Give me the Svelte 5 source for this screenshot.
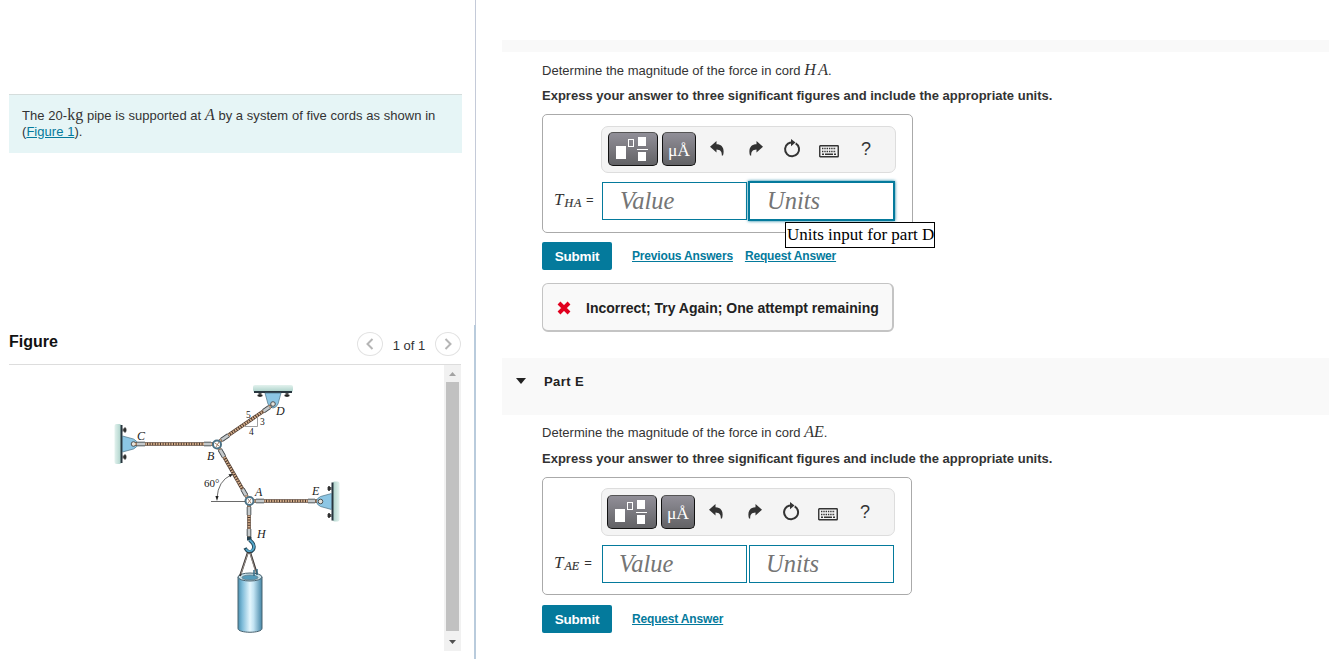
<script lang="ts">
  /**
   * Homework item view: problem statement and figure on the left,
   * answer parts on the right.
   */
  interface Part {
    id: string;
    cord: string;
    links: string[];
    focused: boolean;
    feedback?: string;
  }

  const parts: Part[] = [
    {
      id: 'D',
      cord: 'HA',
      links: ['Previous Answers', 'Request Answer'],
      focused: true,
      feedback: 'Incorrect; Try Again; One attempt remaining'
    },
    { id: 'E', cord: 'AE', links: ['Request Answer'], focused: false }
  ];

  // Cord segments: rope with a metal sleeve at both ends
  const cords = [
    { x1: 135, y1: 444, x2: 213, y2: 444 },
    { x1: 220, y1: 441, x2: 271, y2: 406 },
    { x1: 219, y1: 448, x2: 247, y2: 497 },
    { x1: 254, y1: 501, x2: 317, y2: 501 },
    { x1: 249, y1: 505, x2: 249, y2: 538 }
  ];

  function sleeve(c: (typeof cords)[number], atEnd: boolean) {
    const len = Math.hypot(c.x2 - c.x1, c.y2 - c.y1);
    const a = atEnd ? (len - 9) / len : 2 / len;
    const b = atEnd ? (len - 2) / len : 10 / len;
    const dx = c.x2 - c.x1;
    const dy = c.y2 - c.y1;
    return `M${c.x1 + dx * a} ${c.y1 + dy * a}L${c.x1 + dx * b} ${c.y1 + dy * b}`;
  }
</script>

{#snippet support()}
  <rect x="-7" y="-20" width="7" height="40" rx="2" fill="url(#wall)" />
  <path d="M1-14h4M1 13h4" stroke="#555" stroke-width="3" />
  <path d="M3.500-16.500v5M3.500 10.500v5" stroke="#222" stroke-width="1.500" />
  <path d="M0-19V19" stroke="#28363f" stroke-width="2" />
  <path d="M1-8L12-5Q16-3 16 0T12 5L1 8Z" fill="#8cc6e4" stroke="#4a7184" stroke-width=".7" />
  <circle cx="12" cy="0" r="2.300" fill="#e6e4dc" stroke="#444" stroke-width=".9" />
{/snippet}

{#snippet toolbar()}
  <div class="toolbar">
    <button class="tool templates" aria-label="Templates">
      <svg width="48" height="32" viewBox="0 0 48 32">
        <path d="M7 13h10v13H7zM29 4h8v9h-8zM29 19h8v9h-8zM28 16h11v1H28z" fill="#fff" />
        <rect x="19.5" y="6.5" width="5" height="7" fill="none" stroke="#fff" />
      </svg>
    </button>
    <button class="tool symbols" aria-label="Symbols">μÅ</button>
    <svg class="icon undo" width="14" height="15" viewBox="0 0 14 15">
      <path d="M6.500 0v3.300C12 3.300 15 7.500 13 14.500h-1.200C12 10.500 10.500 8.600 6.500 8.400V11.500L0 5.700Z" fill="#333" />
    </svg>
    <svg class="icon redo" width="14" height="15" viewBox="0 0 14 15">
      <path d="M7.500 0v3.300C2 3.300-1 7.500 1 14.500h1.200C2 10.500 3.500 8.600 7.500 8.400V11.500L14 5.700Z" fill="#333" />
    </svg>
    <svg class="icon reset" width="18" height="19" viewBox="0 0 18 19">
      <path d="M12.700 4.300A7 7 0 1 1 5 4.600Q6.800 3.500 9 3.500" fill="none" stroke="#333" stroke-width="2" />
      <path d="M8 0L12.500 3.500 8 7.200Z" fill="#333" />
    </svg>
    <svg class="icon keyboard" width="20" height="13" viewBox="0 0 20 13">
      <rect x=".75" y=".75" width="18.500" height="11" rx=".5" fill="none" stroke="#333" stroke-width="1.400" />
      <path d="M3 3.500h14M3 6.500h14" stroke="#333" stroke-width="1.600" stroke-dasharray="1.400 .9" />
      <path d="M3 9.300h2M6 9.300h8M15 9.300h2" stroke="#333" stroke-width="1.400" />
    </svg>
    <span class="help">?</span>
  </div>
{/snippet}

<div class="page">
  <aside class="left">
    <section class="problem">
      The 20-<span class="math kg">kg</span> pipe is supported at <i class="math">A</i> by a system of five cords as shown in<br />
      (<a href="#figure">Figure 1</a>).
    </section>

    <section class="figure" id="figure">
      <header class="figure-head">
        <h2>Figure</h2>
        <nav class="pager">
          <button aria-label="Previous">
            <svg width="8" height="12" viewBox="0 0 8 12"><path d="M6.500 1L1.500 6l5 5" /></svg>
          </button>
          <span>1 of 1</span>
          <button aria-label="Next">
            <svg width="8" height="12" viewBox="0 0 8 12"><path d="M1.500 1l5 5-5 5" /></svg>
          </button>
        </nav>
      </header>

      <div class="viewer">
        <svg class="diagram" width="435" height="286" viewBox="9 365 435 286">
          <defs>
            <linearGradient id="wall">
              <stop offset="0" stop-color="#e3f2ee" />
              <stop offset="1" stop-color="#a9d0c8" />
            </linearGradient>
            <linearGradient id="pipe">
              <stop offset="0" stop-color="#4a90b0" />
              <stop offset=".18" stop-color="#7fbcd9" />
              <stop offset=".5" stop-color="#e4f6fd" />
              <stop offset=".65" stop-color="#c2e3f2" />
              <stop offset="1" stop-color="#4587a8" />
            </linearGradient>
          </defs>

          <g transform="translate(121.500 444)">{@render support()}</g>
          <g transform="translate(273 392) rotate(90)">{@render support()}</g>
          <g transform="translate(332.500 501.500) rotate(180)">{@render support()}</g>

          {#each cords as c}
            <line x1={c.x1} y1={c.y1} x2={c.x2} y2={c.y2} stroke="#4a372c" stroke-width="3.600" />
            <line x1={c.x1} y1={c.y1} x2={c.x2} y2={c.y2} stroke="#d3ad8a" stroke-width="2.600" stroke-dasharray="1.600 1" />
            <path d={sleeve(c, false)} stroke="#454c50" stroke-width="4.600" />
            <path d={sleeve(c, false)} stroke="#c5c9cb" stroke-width="2.800" />
            <path d={sleeve(c, true)} stroke="#454c50" stroke-width="4.600" />
            <path d={sleeve(c, true)} stroke="#c5c9cb" stroke-width="2.800" />
          {/each}

          <g fill="#fff" stroke="#4b7286" stroke-width="2">
            <circle cx="217" cy="444.500" r="4" />
            <circle cx="249.500" cy="501" r="4" />
          </g>
          <path d="M215 443l4 3M219 442l-3 5M248 499l3 4M251 499l-3 4" stroke="#a58165" />

          <!-- angle and slope marks -->
          <g fill="none" stroke="#444" stroke-width=".8">
            <path d="M211 501.500h34M217 498Q218 481 231 475" />
            <path d="M245 426.500h12.500V417" stroke="#888" />
          </g>
          <path d="M217 501l-1.600-5h3.200zM233 474l-4.500.3 1.700 3z" fill="#222" />

          <!-- hook, sling and pipe -->
          <path d="M247 536.500h4.500v4H247z" fill="#26404e" />
          <path d="M249.500 540Q256 545 253 550Q249 555 245 548" fill="none" stroke="#234658" stroke-width="3.500" />
          <path d="M249.500 540Q256 545 253 549.500Q249 553.500 246 549" fill="none" stroke="#53a6ca" stroke-width="1.800" />
          <path d="M238 577v51.500c0 5 24 5 24 0V577z" fill="url(#pipe)" stroke="#48626f" />
          <ellipse cx="250" cy="577" rx="12" ry="4" fill="#c9e3ec" stroke="#48626f" />
          <ellipse cx="250" cy="577.500" rx="8" ry="2.500" fill="#559bba" stroke="#5b7480" stroke-width=".7" />
          <path d="M248 552L240 576M250 552L257 574" fill="none" stroke="#3e3836" stroke-width="2" />
          <path d="M248 553L241 574M250 553L256 573" fill="none" stroke="#b7b0aa" stroke-width=".7" />
          <path d="M254 570v6M257 569v6" stroke="#366e88" stroke-width="1.500" />

          <g class="labels">
            <text x="137" y="440">C</text>
            <text x="207" y="460">B</text>
            <text x="276" y="415">D</text>
            <text x="255" y="496">A</text>
            <text x="312" y="495">E</text>
            <text x="257" y="538">H</text>
          </g>
          <g class="numbers">
            <text x="204" y="486.500" class="angle">60°</text>
            <text x="246" y="418">5</text>
            <text x="260" y="425">3</text>
            <text x="249" y="435">4</text>
          </g>
        </svg>
        <div class="scrollbar">
          <svg width="17" height="17" viewBox="0 0 17 17"><path d="M5 11h7L8.500 7z" fill="#a3a3a3" /></svg>
          <div class="thumb"></div>
          <svg width="17" height="20" viewBox="0 0 17 20"><path d="M5 9h7l-3.500 4z" fill="#505050" /></svg>
        </div>
      </div>
    </section>
    <div class="divider"></div>
  </aside>

  <main class="right">
    {#each parts as part}
      <section class="part">
        <header class="part-head" class:cut={part.id === 'D'}>
          {#if part.id !== 'D'}
            <svg width="10" height="6" viewBox="0 0 10 6"><path d="M0 0h10L5 6z" fill="#222" /></svg>
            <h3>Part {part.id}</h3>
          {/if}
        </header>
        <div class="body">
          <p class="question">
            Determine the magnitude of the force in cord <i class="math" class:wide={part.cord === 'HA'}>{part.cord}</i>.
          </p>
          <p class="instruction">Express your answer to three significant figures and include the appropriate units.</p>

          <div class="answer" class:focused={part.focused}>
            {@render toolbar()}
            <div class="entry">
              <span class="label"><i>T</i><i class="sub" class:wide={part.cord === 'HA'}>{part.cord}</i><span class="eq">=</span></span>
              <div class="field">Value</div>
              <div class="field units" class:active={part.focused}>
                Units
                {#if part.focused}
                  <span class="tooltip">Units input for part {part.id}</span>
                {/if}
              </div>
            </div>
          </div>

          <div class="actions">
            <button class="submit">Submit</button>
            {#each part.links as link}
              <a href="#{part.id}">{link}</a>
            {/each}
          </div>

          {#if part.feedback}
            <div class="feedback">
              <svg width="14" height="14" viewBox="0 0 14 14">
                <path d="M2 2l10 10M12 2L2 12" stroke="#e1001e" stroke-width="4" />
              </svg>
              <span>{part.feedback}</span>
            </div>
          {/if}
        </div>
      </section>
    {/each}
  </main>
</div>

<style>
  :global(body) {
    background: #fff;
    overflow: hidden;
  }

  .page {
    display: flex;
    height: 659px;
    color: #333;
    font-family: 'Liberation Sans', Arial, sans-serif;
    font-size: 13px;
  }

  h2,
  h3,
  p {
    margin: 0;
  }

  button {
    padding: 0;
    font-family: inherit;
  }

  a {
    color: #047a9c;
  }

  .math {
    font-family: 'Liberation Serif', 'Times New Roman', serif;
    font-size: 16px;
    line-height: 1px;
  }

  .math.wide {
    letter-spacing: 2.5px;
    margin-right: -2.5px;
  }

  .left {
    position: relative;
    box-sizing: border-box;
    width: 476px;
    padding: 94px 13px 0 9px;
    border-right: 1px solid #c4cad8;
    flex-shrink: 0;
  }

  .problem {
    box-sizing: border-box;
    height: 59px;
    padding: 13px 0 0 13px;
    background: #e6f5f6;
    border-top: 1px solid #d5dddc;
    line-height: 16px;
    white-space: nowrap;
    letter-spacing: 0.045px;
  }

  .figure {
    width: 452px;
    margin-top: 172px;
  }

  .figure-head {
    box-sizing: border-box;
    display: flex;
    justify-content: space-between;
    height: 40px;
    border-bottom: 1px solid #ddd;
  }

  .figure-head h2 {
    margin-top: 7px;
    font-size: 16px;
    line-height: 19px;
    color: #111;
  }

  .pager {
    display: flex;
    align-items: center;
    height: 24px;
    margin-top: 7px;
  }

  .pager span {
    width: 52px;
    padding-top: 2px;
    text-align: center;
    font-size: 13px;
  }

  .pager button {
    display: flex;
    align-items: center;
    justify-content: center;
    width: 26px;
    height: 24px;
    background: #fff;
    border: 1px solid #e2e2e2;
    border-radius: 50%;
  }

  .pager path {
    fill: none;
    stroke: #b5b5b5;
    stroke-width: 2;
  }

  .viewer {
    display: flex;
    height: 286px;
  }

  .labels,
  .numbers {
    font-family: 'Liberation Serif', 'Times New Roman', serif;
    fill: #222;
  }

  .labels {
    font-size: 12px;
    font-style: italic;
  }

  .numbers {
    font-size: 9.5px;
  }

  .angle {
    font-size: 11px;
  }

  .scrollbar {
    display: flex;
    flex-direction: column;
    width: 17px;
    background: #f1f1f1;
  }

  .thumb {
    flex: 1;
    margin: 0 2px;
    background: #c1c1c1;
  }

  .divider {
    position: absolute;
    top: 325px;
    right: -1px;
    bottom: 0;
    width: 2px;
    background: #b9cbdc;
  }

  .right {
    flex: 1;
    padding: 40px 0 0 26px;
  }

  .part-head {
    box-sizing: border-box;
    display: flex;
    align-items: center;
    gap: 18px;
    height: 57px;
    padding: 0 0 11px 14px;
    background: #f9f9f9;
  }

  .part-head.cut {
    height: 12px;
  }

  .part-head h3 {
    font-size: 13px;
    color: #222;
    letter-spacing: 0.4px;
  }

  .body {
    box-sizing: border-box;
    padding: 9px 0 0 40px;
  }

  .part:first-child .body {
    height: 306px;
  }

  .question {
    line-height: 18px;
    letter-spacing: 0.03px;
  }

  .part:first-child .question {
    padding-top: 1px;
    margin-bottom: -1px;
  }

  .instruction {
    margin-top: 8px;
    font-weight: bold;
    line-height: 17px;
    letter-spacing: 0.005px;
  }

  .answer {
    box-sizing: border-box;
    width: 370px;
    height: 118px;
    margin-top: 10px;
    padding-top: 10px;
    border: 1px solid #aaa;
    border-radius: 5px;
  }

  .answer.focused {
    width: 371px;
    height: 119px;
    padding-top: 11px;
  }

  .toolbar {
    box-sizing: border-box;
    display: flex;
    width: 294px;
    height: 48px;
    margin-left: 58px;
    padding: 6px 0 0 5px;
    background: #f4f4f4;
    border: 1px solid #ddd;
    border-radius: 7px;
  }

  .focused .toolbar {
    width: 295px;
    height: 47px;
    padding: 5px 0 0 6px;
  }

  .tool {
    box-sizing: border-box;
    display: flex;
    align-items: center;
    justify-content: center;
    width: 34px;
    height: 34px;
    background: linear-gradient(#918f98, #626265);
    border: 1px solid #111;
    border-top-color: #555;
    border-radius: 5px;
    color: #fff;
    flex-shrink: 0;
  }

  .templates {
    width: 50px;
    margin-right: 4px;
  }

  .symbols {
    padding-top: 3px;
    font-family: 'Liberation Serif', 'Times New Roman', serif;
    font-size: 17.5px;
  }

  .icon {
    flex-shrink: 0;
  }

  .undo {
    margin: 9px 0 0 14px;
  }

  .redo {
    margin: 9px 0 0 25px;
  }

  .reset {
    margin: 7px 0 0 20px;
  }

  .keyboard {
    margin: 13px 0 0 18px;
  }

  .help {
    margin: 6px 0 0 22px;
    font-size: 18px;
    line-height: 22px;
  }

  .entry {
    display: flex;
    margin-top: 9px;
  }

  .label {
    box-sizing: border-box;
    width: 59px;
    padding: 8px 0 0 11px;
    font-family: 'Liberation Serif', 'Times New Roman', serif;
    font-size: 17px;
    line-height: 20px;
    white-space: nowrap;
  }

  .sub {
    margin-left: 1px;
    font-size: 12px;
    -webkit-text-stroke: 0.2px #333;
    position: relative;
    top: 2px;
  }

  .sub.wide {
    letter-spacing: 0.8px;
  }

  .eq {
    margin-left: 5px;
    font-family: 'Liberation Sans', Arial, sans-serif;
    font-size: 13px;
    position: relative;
    top: -1px;
  }

  .wide + .eq {
    margin-left: 4px;
  }

  .field {
    box-sizing: border-box;
    width: 145px;
    height: 38px;
    padding-left: 16px;
    border: 1px solid #047a9c;
    color: #757575;
    font-family: 'Liberation Serif', 'Times New Roman', serif;
    font-size: 24.5px;
    font-style: italic;
    line-height: 36px;
  }

  .focused .field {
    padding-left: 17px;
  }

  .units {
    position: relative;
    margin-left: 2px;
  }

  .active {
    box-shadow: 0 0 0 1px #047a9c, 0 0 3px 1px #047a9c;
  }

  .tooltip {
    position: absolute;
    box-sizing: border-box;
    top: 39px;
    left: 35px;
    z-index: 2;
    width: 150px;
    height: 26px;
    padding-left: 1px;
    background: #fff;
    border: 1px solid #000;
    color: #000;
    font-size: 17px;
    font-style: normal;
    line-height: 23px;
    white-space: nowrap;
  }

  .actions {
    display: flex;
    align-items: center;
    margin-top: 10px;
  }

  .focused + .actions {
    margin-top: 9px;
  }

  .actions a {
    margin-left: 12px;
    font-size: 12px;
    font-weight: bold;
    letter-spacing: -0.17px;
  }

  .actions .submit + a {
    margin-left: 20px;
  }

  .submit {
    width: 70px;
    height: 28px;
    padding-top: 1px;
    background: #047a9c;
    border: 0;
    border-radius: 2px;
    color: #fff;
    font-size: 13.5px;
    font-weight: bold;
    letter-spacing: -0.2px;
  }

  .feedback {
    box-sizing: border-box;
    display: flex;
    align-items: center;
    gap: 15px;
    width: 352px;
    height: 49px;
    margin-top: 13px;
    padding: 1px 0 0 14px;
    background: #f9f9f9;
    border: 1px solid #c4c4c4;
    border-right-width: 2px;
    border-bottom-width: 2px;
    border-radius: 6px;
    color: #222;
    font-size: 14px;
    font-weight: bold;
    white-space: nowrap;
  }
</style>
